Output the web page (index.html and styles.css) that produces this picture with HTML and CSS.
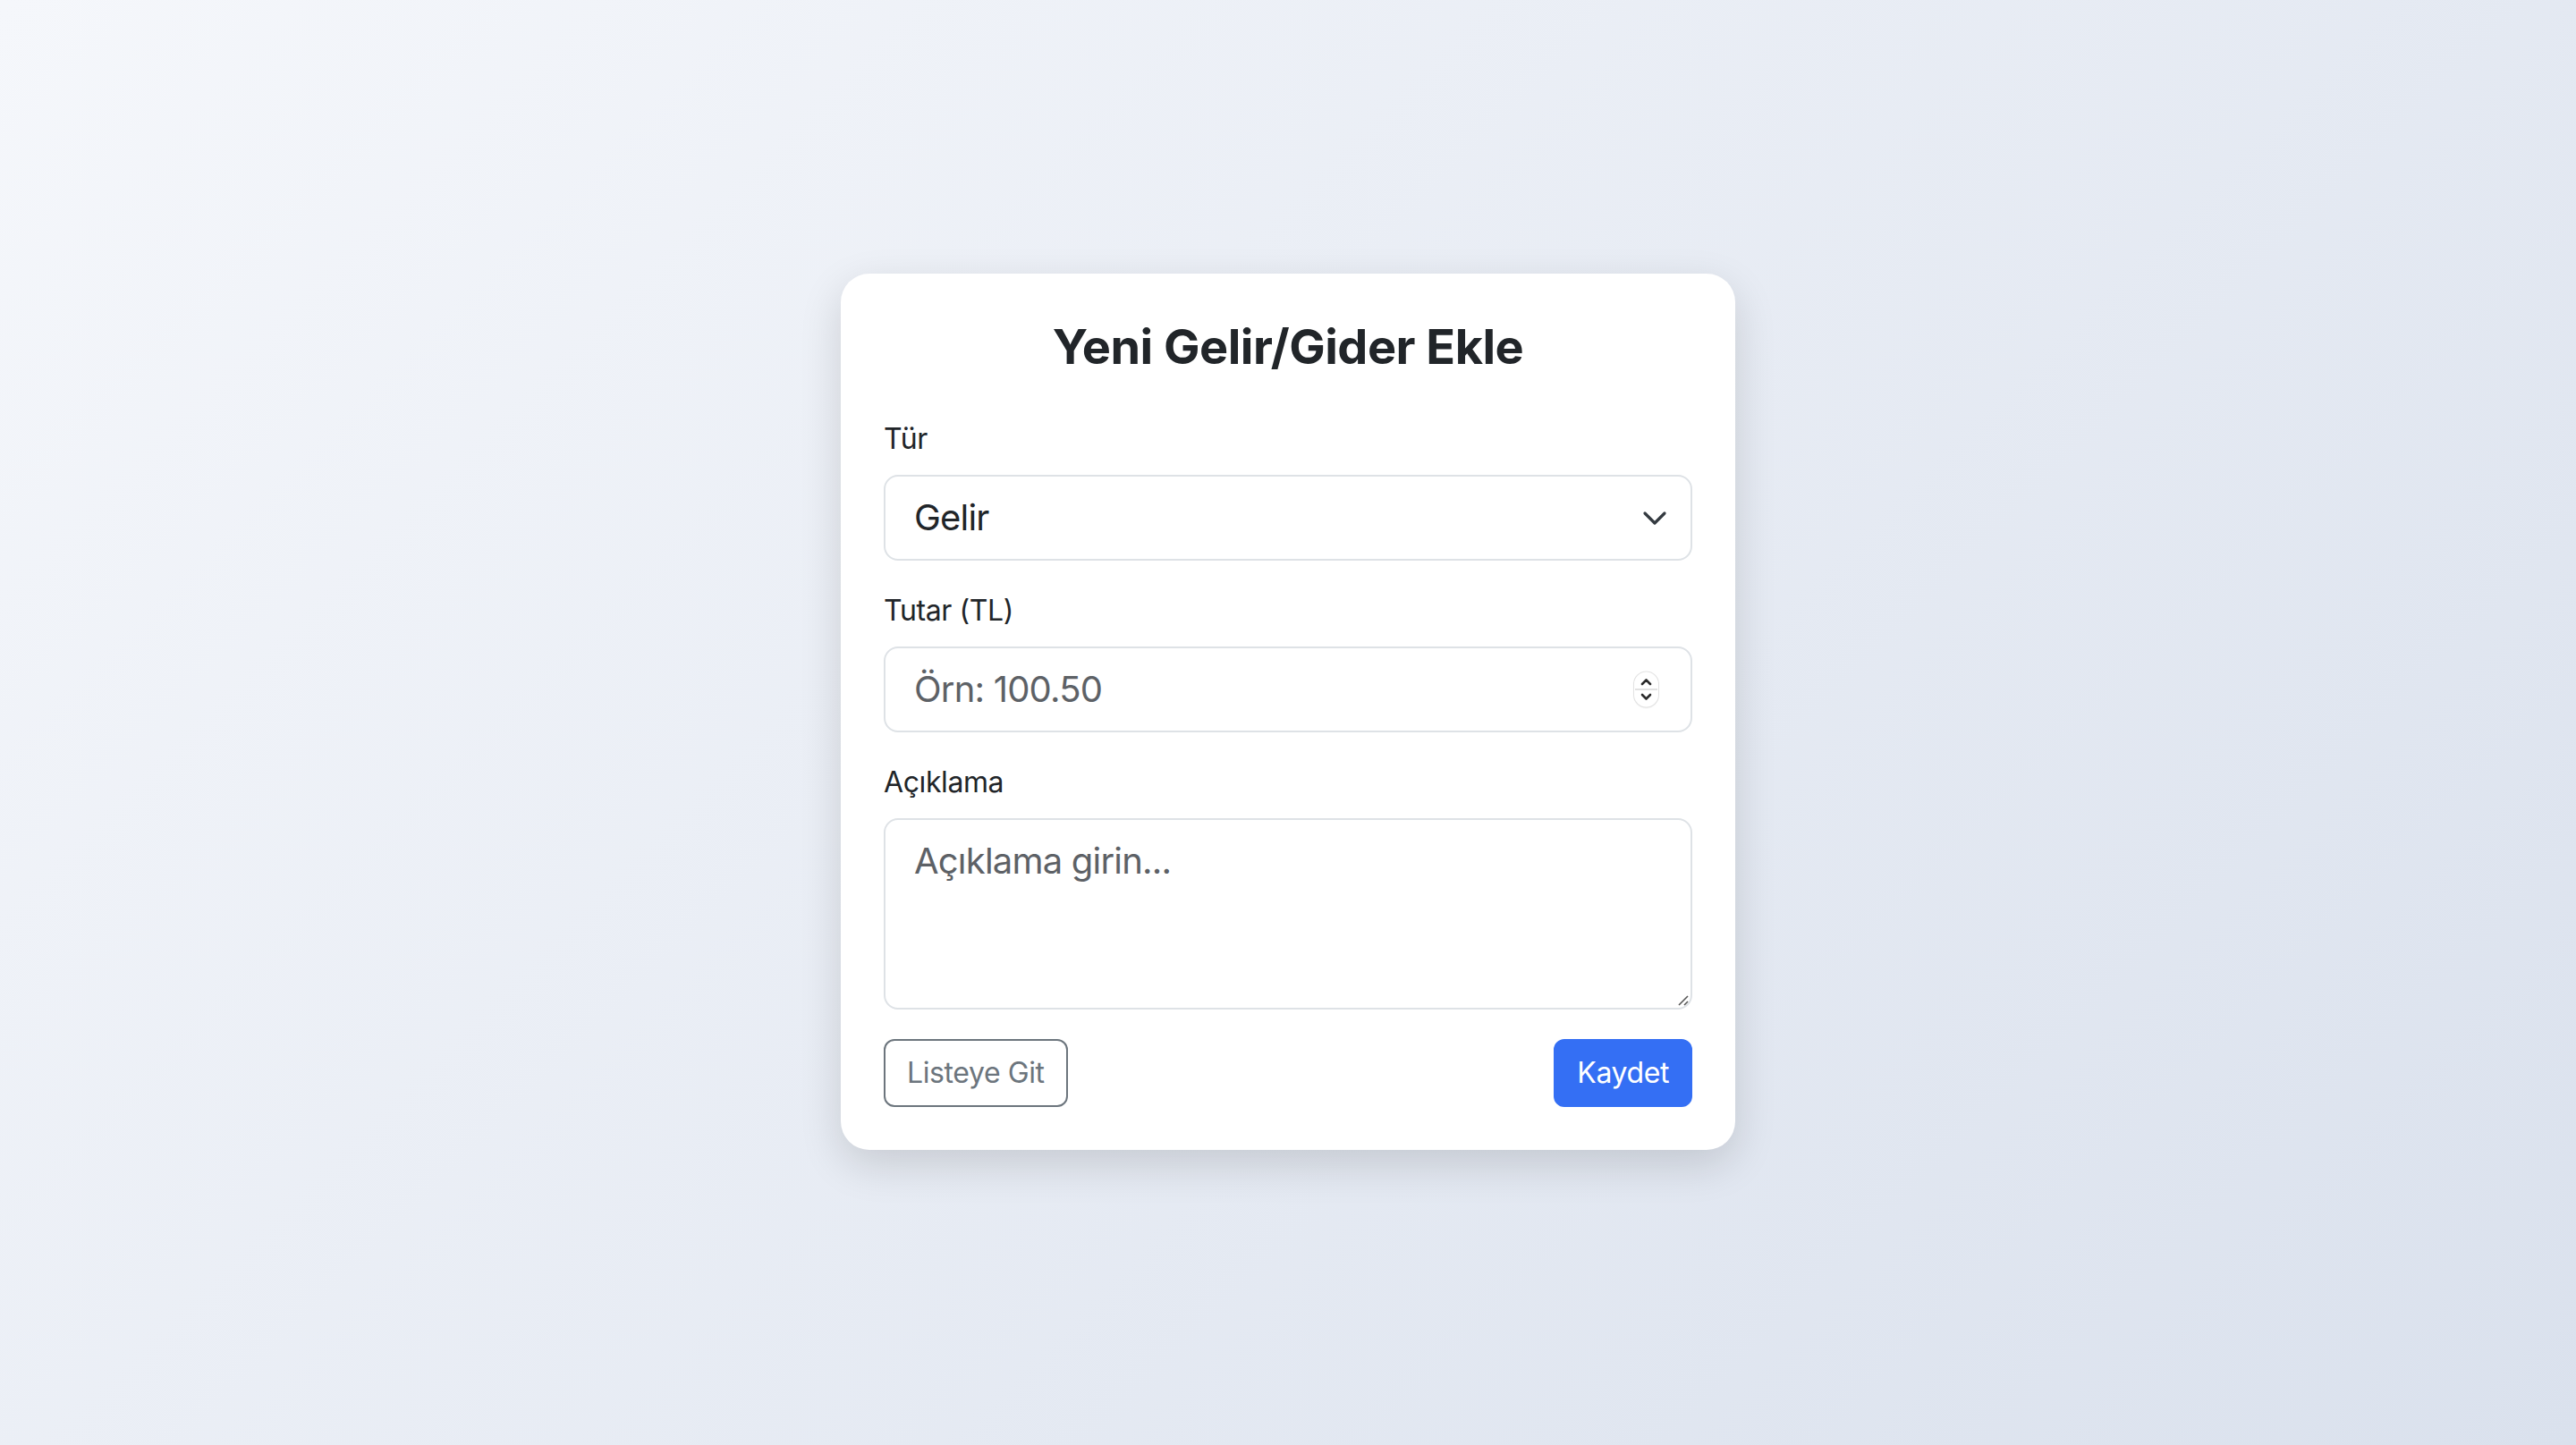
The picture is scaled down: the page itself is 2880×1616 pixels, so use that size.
FILE: index.html
```html
<!DOCTYPE html>
<html lang="tr">
<head>
<meta charset="utf-8">
<title>Yeni Gelir/Gider Ekle</title>
<link rel="stylesheet" href="styles.css">
</head>
<body>
<main class="card">
  <h1 class="title">Yeni Gelir/Gider Ekle</h1>
  <form class="form">
    <div class="field">
      <label class="label" for="tur">Tür</label>
      <div class="control-wrap">
        <select id="tur" class="control select">
          <option>Gelir</option>
          <option>Gider</option>
        </select>
        <svg class="select-arrow" width="32" height="24" viewBox="0 0 16 12" aria-hidden="true"><path d="M2.5 3.5l5.5 5.5 5.5-5.5" fill="none" stroke="#343a40" stroke-width="1.6" stroke-linecap="round" stroke-linejoin="round"/></svg>
      </div>
    </div>
    <div class="field">
      <label class="label" for="tutar">Tutar (TL)</label>
      <div class="control-wrap">
        <input id="tutar" class="control" type="text" placeholder="Örn: 100.50">
        <span class="spinner" aria-hidden="true">
          <svg width="27" height="39" viewBox="0 0 27 39"><path d="M9 13.5l4.5-4.5 4.5 4.5" fill="none" stroke="#2b2b2b" stroke-width="2.6" stroke-linecap="round" stroke-linejoin="round"/><line x1="1" y1="19.5" x2="26" y2="19.5" stroke="#d9d9d9" stroke-width="1.6"/><path d="M9 25.5l4.5 4.5 4.5-4.5" fill="none" stroke="#2b2b2b" stroke-width="2.6" stroke-linecap="round" stroke-linejoin="round"/></svg>
        </span>
      </div>
    </div>
    <div class="field">
      <label class="label" for="aciklama">Açıklama</label>
      <div class="control-wrap">
        <textarea id="aciklama" class="control textarea" rows="3" placeholder="Açıklama girin..."></textarea>
        <svg class="grip" width="14" height="14" viewBox="0 0 14 14" aria-hidden="true"><line x1="3" y1="13" x2="13" y2="3" stroke="#555" stroke-width="1.6"/><line x1="9" y1="13" x2="13" y2="9" stroke="#555" stroke-width="1.6"/></svg>
      </div>
    </div>
    <div class="actions">
      <a class="btn btn-outline" href="#">Listeye Git</a>
      <button class="btn btn-primary" type="button">Kaydet</button>
    </div>
  </form>
</main>
</body>
</html>
```

FILE: styles.css
```css
* { box-sizing: border-box; }
html, body { margin: 0; height: 100%; }
body {
  font-family: Inter, "Liberation Sans", Arial, sans-serif;
  color: #212529;
  background: linear-gradient(135deg, #f5f7fb 0%, #dae1ed 100%);
  min-height: 100vh;
  display: flex;
  align-items: center;
  justify-content: center;
  padding-bottom: 25px;
}
.card {
  width: 1000px;
  background: #fff;
  border-radius: 32px;
  padding: 48px;
  box-shadow: 0 16px 48px rgba(0, 0, 0, 0.14);
}
.title {
  margin: 0 0 46px;
  font-size: 54px;
  line-height: 67px;
  font-weight: 700;
  text-align: center;
  letter-spacing: -0.5px;
}
.form { display: flex; flex-direction: column; gap: 32px; }
.field { display: flex; flex-direction: column; }
.label {
  font-size: 32px;
  line-height: 48px;
  margin-bottom: 16px;
  letter-spacing: -0.4px;
}
.control-wrap { position: relative; }
.control {
  display: block;
  width: 100%;
  height: 96px;
  font-family: inherit;
  font-size: 40px;
  line-height: 60px;
  letter-spacing: -0.8px;
  color: #212529;
  padding: 16px 32px;
  border: 2px solid #dee2e6;
  border-radius: 16px;
  background: #fff;
  outline: none;
}
.control::placeholder { color: #5d6166; opacity: 1; }
.select { appearance: none; -webkit-appearance: none; padding-right: 96px; }
.select-arrow {
  position: absolute;
  right: 26px;
  top: 50%;
  transform: translateY(-50%);
  pointer-events: none;
}
.spinner {
  position: absolute;
  right: 38px;
  top: 50%;
  transform: translateY(-50%);
  width: 27px;
  height: 39px;
  border-radius: 14px;
  background: #fff;
  box-shadow: 0 0 0 1px #e2e2e2, 0 1px 2px rgba(0,0,0,0.12);
  display: flex;
}
.textarea { height: 214px; resize: none; }
.grip { position: absolute; right: 4px; bottom: 4px; }
.actions {
  display: flex;
  justify-content: space-between;
  align-items: center;
  padding-top: 1px;
}
.btn {
  display: inline-flex;
  align-items: center;
  justify-content: center;
  height: 76px;
  padding: 0 24px;
  font-family: inherit;
  font-size: 32px;
  letter-spacing: -0.4px;
  border-radius: 12px;
  border: 2px solid transparent;
  text-decoration: none;
  cursor: pointer;
}
.btn-outline { color: #6c757d; border-color: #6c757d; background: #fff; }
.btn-primary { color: #fff; background: #346ff4; border-color: #346ff4; }
```
